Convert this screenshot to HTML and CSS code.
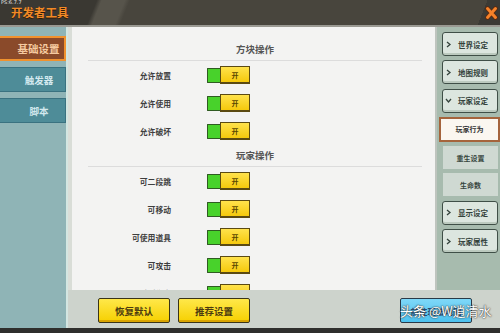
FILE: index.html
```html
<!DOCTYPE html>
<html lang="zh">
<head>
<meta charset="utf-8">
<title>开发者工具</title>
<link rel="stylesheet" href="styles.css">
</head>
<body>
<div class="app">
  <header class="topbar">
    <span class="ver">PS:6.7.7</span>
    <h1 class="title">开发者工具</h1>
    <button class="close" aria-label="关闭">
      <svg width="13" height="14" viewBox="0 0 13 14">
        <path d="M2.5 2.5 L10.5 11.5 M10.5 2.5 L2.5 11.5" stroke="#5a2a10" stroke-width="4.6" stroke-linecap="round"/>
        <path d="M2.5 2.5 L10.5 11.5 M10.5 2.5 L2.5 11.5" stroke="#f5822a" stroke-width="3" stroke-linecap="round"/>
      </svg>
    </button>
  </header>
  <div class="main">
    <nav class="left">
      <div class="lbtn active">基础设置</div>
      <div class="lbtn">触发器</div>
      <div class="lbtn">脚本</div>
    </nav>
    <div class="work">
      <div class="upper">
        <section class="panel">
          <div class="sec-title first">方块操作</div>
          <div class="row"><span class="lbl">允许放置</span><span class="toggle"><i class="tg-on"></i><b class="tg-knob">开</b></span></div>
          <div class="row"><span class="lbl">允许使用</span><span class="toggle"><i class="tg-on"></i><b class="tg-knob">开</b></span></div>
          <div class="row"><span class="lbl">允许破坏</span><span class="toggle"><i class="tg-on"></i><b class="tg-knob">开</b></span></div>
          <div class="sec-title">玩家操作</div>
          <div class="row"><span class="lbl">可二段跳</span><span class="toggle"><i class="tg-on"></i><b class="tg-knob">开</b></span></div>
          <div class="row"><span class="lbl">可移动</span><span class="toggle"><i class="tg-on"></i><b class="tg-knob">开</b></span></div>
          <div class="row"><span class="lbl">可使用道具</span><span class="toggle"><i class="tg-on"></i><b class="tg-knob">开</b></span></div>
          <div class="row"><span class="lbl">可攻击</span><span class="toggle"><i class="tg-on"></i><b class="tg-knob">开</b></span></div>
          <div class="row"><span class="lbl">可受到伤害</span><span class="toggle"><i class="tg-on"></i><b class="tg-knob">开</b></span></div>
        </section>
        <aside class="right">
          <div class="rbtn"><svg class="chev" width="8" height="7" viewBox="0 0 8 7"><path d="M2 1 L5 3.5 L2 6" fill="none" stroke="#33423b" stroke-width="1.3"/></svg>世界设定</div>
          <div class="rbtn"><svg class="chev" width="8" height="7" viewBox="0 0 8 7"><path d="M2 1 L5 3.5 L2 6" fill="none" stroke="#33423b" stroke-width="1.3"/></svg>地图规则</div>
          <div class="rbtn"><svg class="chev" width="8" height="7" viewBox="0 0 8 7"><path d="M1 2 L3.5 5 L6 2" fill="none" stroke="#33423b" stroke-width="1.3"/></svg>玩家设定</div>
          <div class="rsel">玩家行为</div>
          <div class="rsub">重生设置</div>
          <div class="rsub">生命数</div>
          <div class="rbtn"><svg class="chev" width="8" height="7" viewBox="0 0 8 7"><path d="M2 1 L5 3.5 L2 6" fill="none" stroke="#33423b" stroke-width="1.3"/></svg>显示设定</div>
          <div class="rbtn"><svg class="chev" width="8" height="7" viewBox="0 0 8 7"><path d="M2 1 L5 3.5 L2 6" fill="none" stroke="#33423b" stroke-width="1.3"/></svg>玩家属性</div>
        </aside>
      </div>
      <div class="bottom">
        <button class="ybtn">恢复默认</button>
        <button class="ybtn">推荐设置</button>
        <button class="bbtn">前往玩法地图</button>
        <span class="wm">头条 @W逍清水</span>
      </div>
    </div>
  </div>
  <div class="footer"></div>
</div>
</body>
</html>
```
FILE: styles.css
```css
html, body {
  margin: 0;
  padding: 0;
}
body {
  width: 500px;
  height: 333px;
  overflow: hidden;
  font-family: "Noto Sans CJK SC", "Noto Sans", sans-serif;
}
.app {
  display: flex;
  flex-direction: column;
  height: 333px;
}
.topbar {
  flex: none;
  height: 25px;
  border-bottom: 2px solid #9a9992;
  display: flex;
  align-items: center;
  padding-left: 11px;
  position: relative;
  background:
    linear-gradient(112deg, transparent 0 95.6%, #3b3a35 95.6%),
    linear-gradient(112deg, #3a3832 0 19%, #57544b 20% 24.5%, #48453d 25.5%);
}
.ver {
  position: absolute;
  left: 1px;
  top: -1px;
  font-size: 5px;
  line-height: 7px;
  color: #e6e6e6;
  font-family: "DejaVu Sans", sans-serif;
}
.title {
  margin: 0;
  font-size: 11.5px;
  font-weight: 700;
  line-height: 1;
  color: #f28a26;
  text-shadow: 0 1px 0 #2a1a0a;
}
.close {
  margin-left: auto;
  margin-right: 2px;
  padding: 0;
  border: 0;
  background: none;
  display: flex;
}
.main {
  flex: 1;
  display: flex;
  min-height: 0;
}
.left {
  width: 66px;
  flex: none;
  background: #8fb4b6;
  padding-top: 9px;
  display: flex;
  flex-direction: column;
  gap: 6px;
}
.lbtn {
  height: 25px;
  box-sizing: border-box;
  display: flex;
  align-items: center;
  justify-content: center;
  padding-left: 13px;
  background: #4e8c98;
  border: 1px solid #3a7280;
  border-left: 0;
  font-size: 9.5px;
  font-weight: 700;
  color: #d3e9ef;
}
.lbtn.active {
  background: #8a4a2a;
  border: 2px solid #f0922e;
  border-left: 0;
  font-size: 10.5px;
  color: #f6caa0;
}
.work {
  flex: 1;
  display: flex;
  flex-direction: column;
  background: #cdd3cc;
  border-left: 2px solid #d3e6e1;
}
.upper {
  flex: none;
  height: 263px;
  display: flex;
  padding-left: 4px;
  background: #d9ddd7;
}
.panel {
  flex: 1;
  background: #f3f3f2;
  border-right: 2px solid #bec4be;
  overflow: hidden;
  padding: 12px 13px 0 16px;
}
.sec-title {
  height: 21px;
  line-height: 21px;
  text-align: center;
  font-size: 9.5px;
  font-weight: 700;
  color: #555;
  border-bottom: 1px solid #dcdcdc;
}
.row {
  height: 28px;
  display: grid;
  grid-template-columns: 83px 43px;
  column-gap: 36px;
  align-items: center;
}
.lbl {
  text-align: right;
  font-size: 7.8px;
  font-weight: 700;
  color: #3e3e3e;
}
.toggle {
  display: flex;
  align-items: center;
  height: 18px;
}
.tg-on {
  width: 13px;
  height: 15px;
  box-sizing: border-box;
  background: #48d22b;
  border: 1px solid #2f5b22;
  border-right: 0;
  border-radius: 1px 0 0 1px;
}
.tg-knob {
  width: 30px;
  height: 18px;
  box-sizing: border-box;
  background: linear-gradient(#ffe24c, #f5c90c);
  border: 1px solid #5b4a12;
  border-bottom-width: 2px;
  display: flex;
  align-items: center;
  justify-content: center;
  font-size: 7px;
  font-weight: 700;
  color: #5a4600;
}
.right {
  width: 63px;
  flex: none;
  box-sizing: border-box;
  background: #a7bbae;
  padding: 5px 2px 0 5px;
  display: flex;
  flex-direction: column;
  gap: 4.3px;
}
.rbtn {
  height: 24px;
  box-sizing: border-box;
  border: 1.5px solid #3f4f47;
  border-radius: 3px;
  background: #dce6df;
  box-shadow: inset 0 -2px 0 #bccabf;
  display: flex;
  align-items: center;
  padding-left: 2px;
  font-size: 7.5px;
  font-weight: 700;
  color: #33423b;
}
.chev {
  flex: none;
  margin-right: 5px;
}
.rsel {
  height: 25px;
  margin: 0 -2px 0 -3px;
  box-sizing: border-box;
  border: 2px solid #a5643c;
  background: #fbf7f0;
  display: flex;
  align-items: center;
  justify-content: center;
  font-size: 7px;
  font-weight: 700;
  color: #333;
}
.rsub {
  height: 23px;
  margin-left: 1px;
  background: #cfd9d2;
  display: flex;
  align-items: center;
  justify-content: center;
  font-size: 7px;
  font-weight: 700;
  color: #38463f;
}
.bottom {
  flex: 1;
  display: flex;
  align-items: flex-start;
  gap: 8px;
  padding: 8px 28px 0 30px;
  position: relative;
}
.ybtn, .bbtn {
  width: 72px;
  height: 25px;
  box-sizing: border-box;
  padding: 0;
  font-family: inherit;
  font-weight: 700;
  display: flex;
  align-items: center;
  justify-content: center;
}
.ybtn {
  background: linear-gradient(#ffe84a, #f6d000);
  border: 1.5px solid #3a3418;
  border-radius: 2px;
  box-shadow: inset 0 -2px 0 #d9a400;
  font-size: 9.5px;
  color: #4a3a10;
}
.bbtn {
  margin-left: auto;
  background: linear-gradient(#7fd8f8, #4cc2ef);
  border: 1.5px solid #2a3a48;
  border-radius: 2px;
  font-size: 8.5px;
  color: #2a4a70;
}
.wm {
  position: absolute;
  left: 332px;
  top: 12px;
  font-size: 13px;
  line-height: 17px;
  color: #fff;
  white-space: nowrap;
  text-shadow: 0 0 2px #333, 0 0 1px #333;
}
.footer {
  flex: none;
  height: 5px;
  background: #2f2f2d;
}
```
